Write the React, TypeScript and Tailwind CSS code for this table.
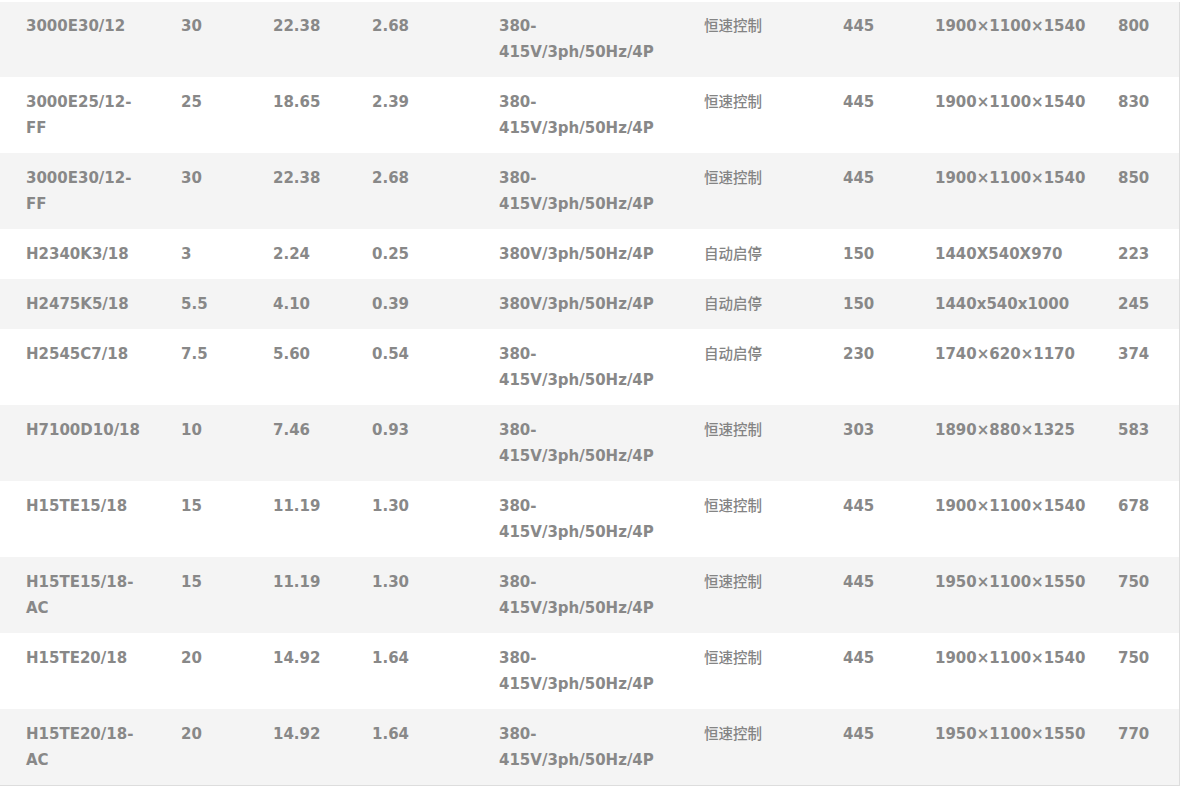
import React from "react";

type Row = {
  model: string;
  hp: string;
  kw: string;
  flow: string;
  power: string;
  control: string;
  tank: string;
  size: string;
  weight: string;
};

const rows: Row[] = [
  { model: "3000E30/12", hp: "30", kw: "22.38", flow: "2.68", power: "380-\n415V/3ph/50Hz/4P", control: "恒速控制", tank: "445", size: "1900×1100×1540", weight: "800" },
  { model: "3000E25/12-\nFF", hp: "25", kw: "18.65", flow: "2.39", power: "380-\n415V/3ph/50Hz/4P", control: "恒速控制", tank: "445", size: "1900×1100×1540", weight: "830" },
  { model: "3000E30/12-\nFF", hp: "30", kw: "22.38", flow: "2.68", power: "380-\n415V/3ph/50Hz/4P", control: "恒速控制", tank: "445", size: "1900×1100×1540", weight: "850" },
  { model: "H2340K3/18", hp: "3", kw: "2.24", flow: "0.25", power: "380V/3ph/50Hz/4P", control: "自动启停", tank: "150", size: "1440X540X970", weight: "223" },
  { model: "H2475K5/18", hp: "5.5", kw: "4.10", flow: "0.39", power: "380V/3ph/50Hz/4P", control: "自动启停", tank: "150", size: "1440x540x1000", weight: "245" },
  { model: "H2545C7/18", hp: "7.5", kw: "5.60", flow: "0.54", power: "380-\n415V/3ph/50Hz/4P", control: "自动启停", tank: "230", size: "1740×620×1170", weight: "374" },
  { model: "H7100D10/18", hp: "10", kw: "7.46", flow: "0.93", power: "380-\n415V/3ph/50Hz/4P", control: "恒速控制", tank: "303", size: "1890×880×1325", weight: "583" },
  { model: "H15TE15/18", hp: "15", kw: "11.19", flow: "1.30", power: "380-\n415V/3ph/50Hz/4P", control: "恒速控制", tank: "445", size: "1900×1100×1540", weight: "678" },
  { model: "H15TE15/18-\nAC", hp: "15", kw: "11.19", flow: "1.30", power: "380-\n415V/3ph/50Hz/4P", control: "恒速控制", tank: "445", size: "1950×1100×1550", weight: "750" },
  { model: "H15TE20/18", hp: "20", kw: "14.92", flow: "1.64", power: "380-\n415V/3ph/50Hz/4P", control: "恒速控制", tank: "445", size: "1900×1100×1540", weight: "750" },
  { model: "H15TE20/18-\nAC", hp: "20", kw: "14.92", flow: "1.64", power: "380-\n415V/3ph/50Hz/4P", control: "恒速控制", tank: "445", size: "1950×1100×1550", weight: "770" },
];

const widths = ["w-[155px]", "w-[92px]", "w-[99px]", "w-[127px]", "w-[205px]", "w-[139px]", "w-[92px]", "w-[183px]", "w-[87px]"];

export default function App() {
  return (
    <div className="w-[1180px] h-[786px] overflow-hidden bg-white pt-[2px]">
      <table
        className="w-[1179px] table-fixed border-collapse border-r border-b border-[#dddddd] text-[15px] leading-[26px] text-[#888888] font-bold"
        style={{ fontFamily: '"DejaVu Sans", "Noto Sans CJK SC", sans-serif' }}
      >
        <colgroup>
          {widths.map((w, i) => (
            <col key={i} className={w} />
          ))}
        </colgroup>
        <tbody>
          {rows.map((r, i) => {
            const pad = i === 0 ? "pt-[11px] pb-[12px]" : "pt-[12px] pb-[12px]";
            const cnPad = i === 0 ? "pt-[10px] pb-[13px]" : "pt-[11px] pb-[13px]";
            const base = "pl-[26px] pr-2 align-top whitespace-pre-line";
            const cell = `${pad} ${base}`;
            return (
              <tr key={i} className={i % 2 === 0 ? "bg-[#f4f4f4]" : "bg-white"}>
                <td className={cell}>{r.model}</td>
                <td className={cell}>{r.hp}</td>
                <td className={cell}>{r.kw}</td>
                <td className={cell}>{r.flow}</td>
                <td className={cell}>{r.power}</td>
                <td
                  className={`${cnPad} ${base} text-[14.5px] font-medium text-[#848484]`}
                  style={{ fontFamily: '"Noto Sans CJK SC", sans-serif' }}
                >
                  {r.control}
                </td>
                <td className={cell}>{r.tank}</td>
                <td className={cell}>{r.size}</td>
                <td className={cell}>{r.weight}</td>
              </tr>
            );
          })}
        </tbody>
      </table>
    </div>
  );
}
